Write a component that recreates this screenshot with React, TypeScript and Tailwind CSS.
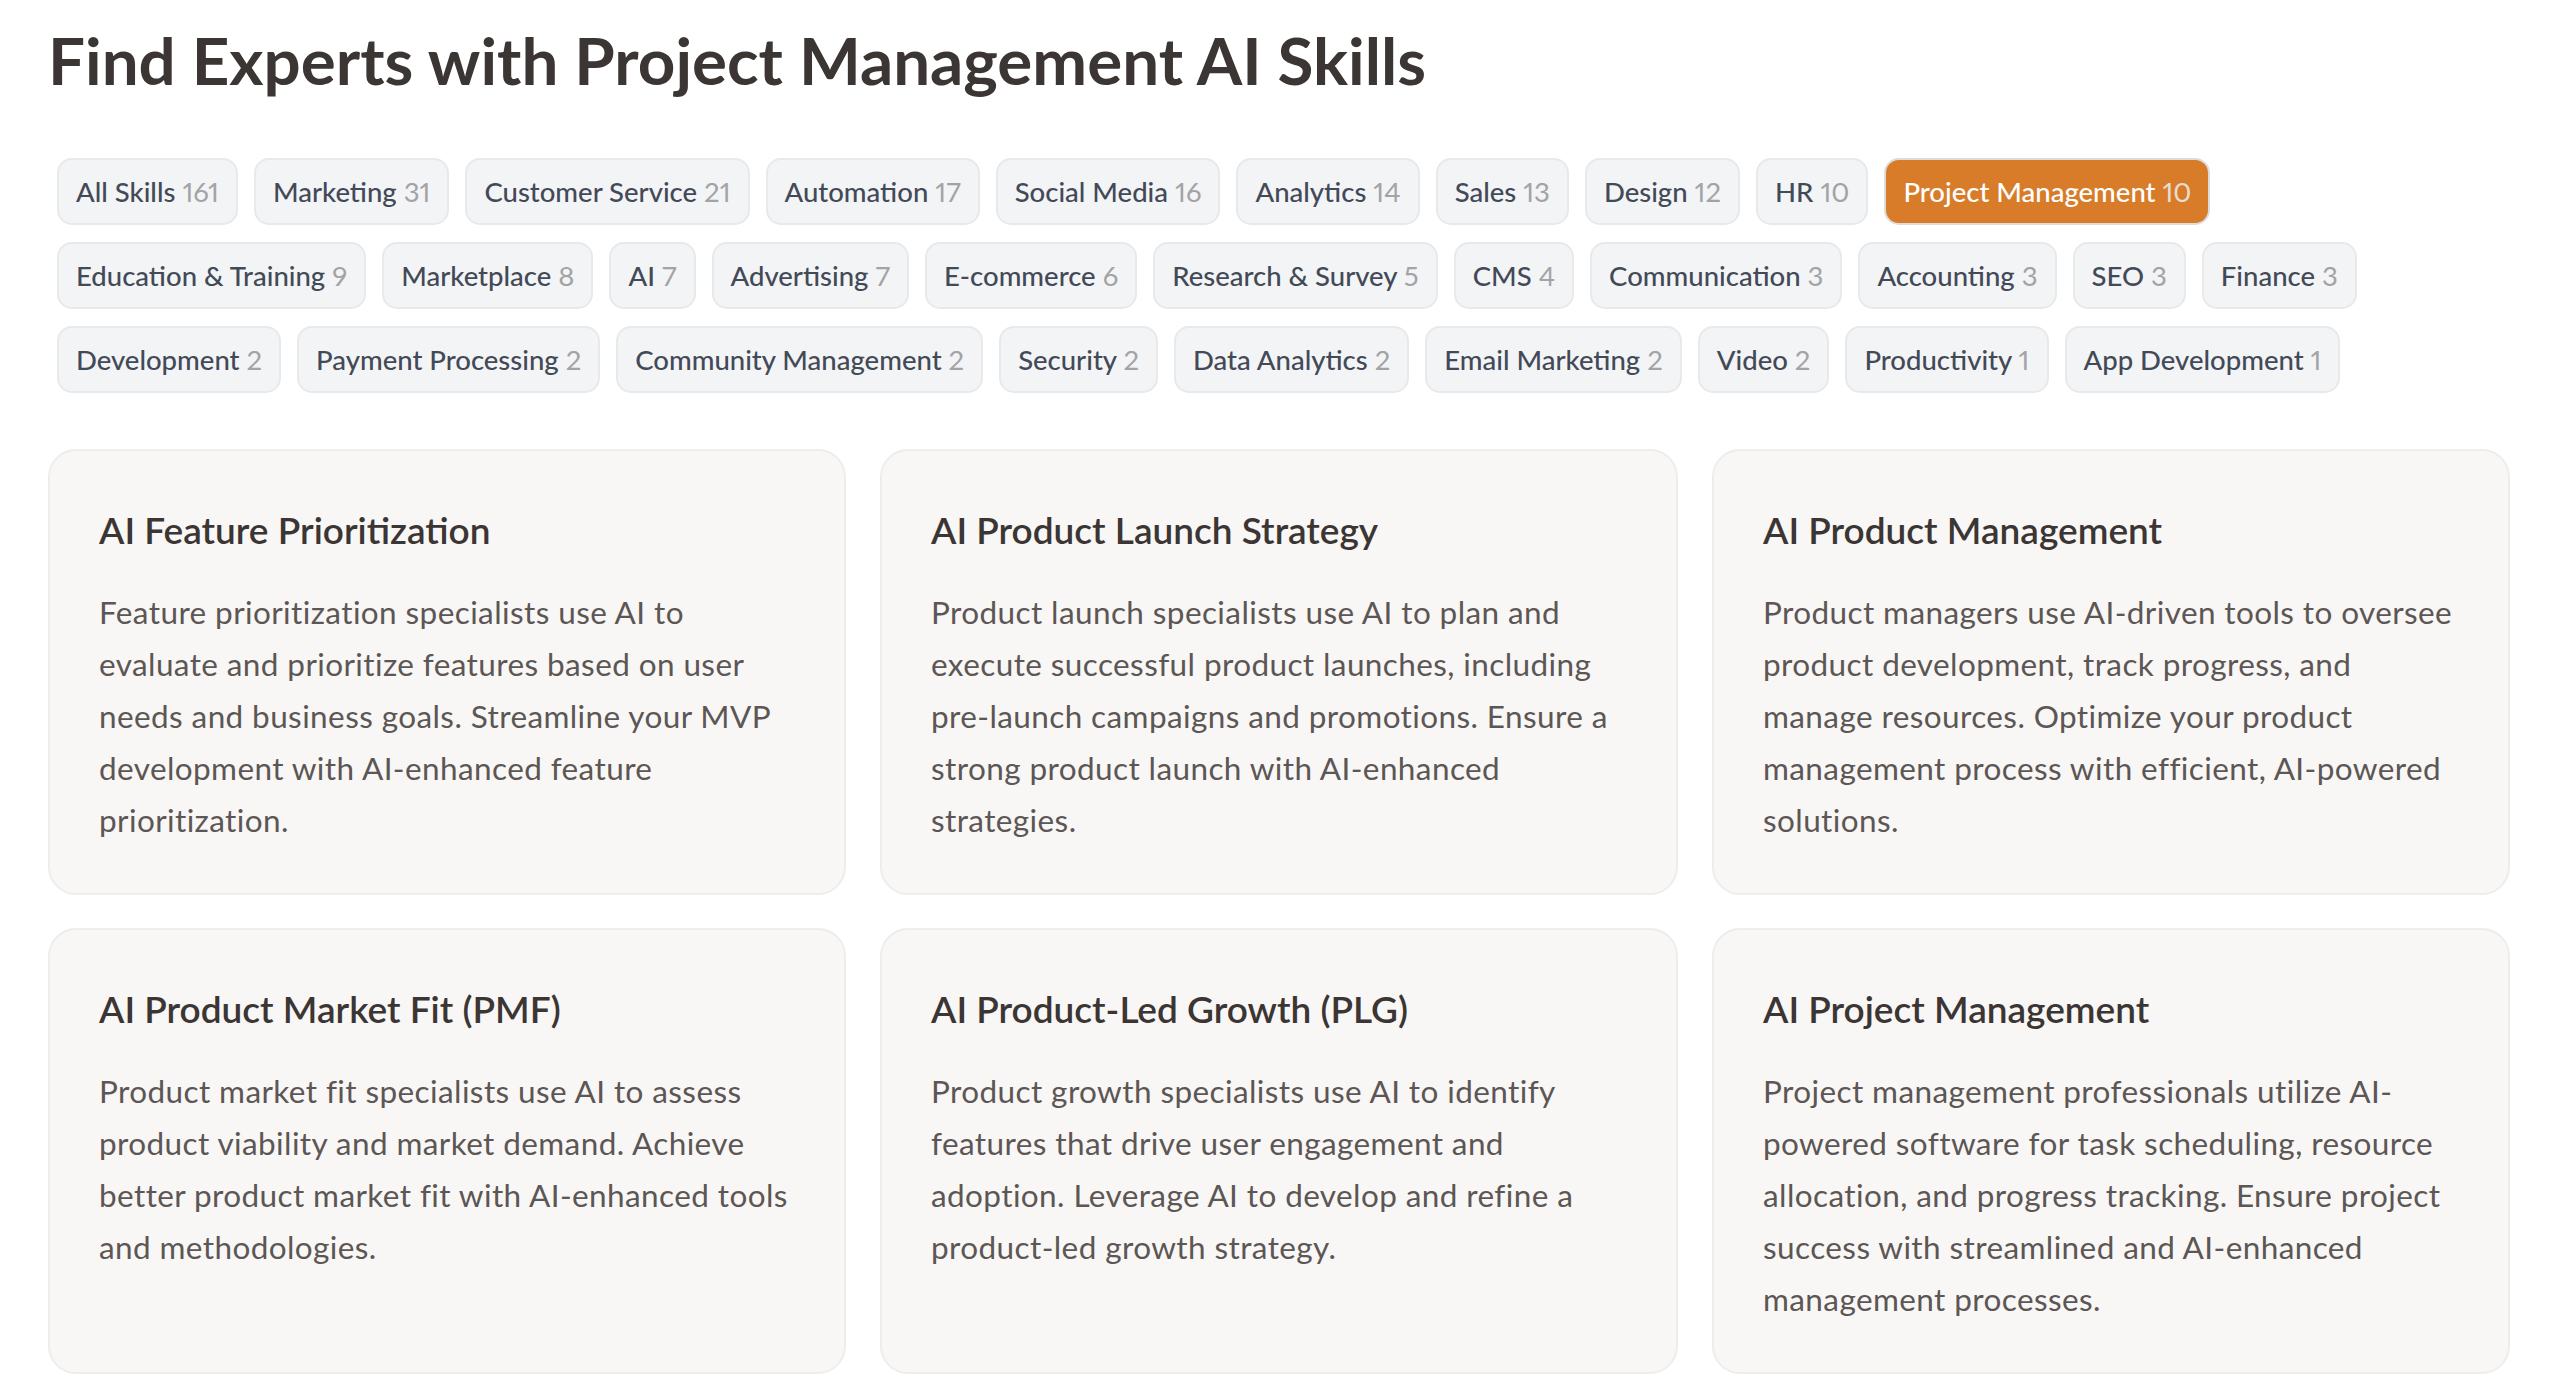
import React from "react";

type Skill = { name: string; count: number };

const skills: Skill[] = [
  { name: "All Skills", count: 161 },
  { name: "Marketing", count: 31 },
  { name: "Customer Service", count: 21 },
  { name: "Automation", count: 17 },
  { name: "Social Media", count: 16 },
  { name: "Analytics", count: 14 },
  { name: "Sales", count: 13 },
  { name: "Design", count: 12 },
  { name: "HR", count: 10 },
  { name: "Project Management", count: 10 },
  { name: "Education & Training", count: 9 },
  { name: "Marketplace", count: 8 },
  { name: "AI", count: 7 },
  { name: "Advertising", count: 7 },
  { name: "E-commerce", count: 6 },
  { name: "Research & Survey", count: 5 },
  { name: "CMS", count: 4 },
  { name: "Communication", count: 3 },
  { name: "Accounting", count: 3 },
  { name: "SEO", count: 3 },
  { name: "Finance", count: 3 },
  { name: "Development", count: 2 },
  { name: "Payment Processing", count: 2 },
  { name: "Community Management", count: 2 },
  { name: "Security", count: 2 },
  { name: "Data Analytics", count: 2 },
  { name: "Email Marketing", count: 2 },
  { name: "Video", count: 2 },
  { name: "Productivity", count: 1 },
  { name: "App Development", count: 1 },
];

const experts = [
  {
    title: "AI Feature Prioritization",
    text: "Feature prioritization specialists use AI to evaluate and prioritize features based on user needs and business goals. Streamline your MVP development with AI-enhanced feature prioritization.",
  },
  {
    title: "AI Product Launch Strategy",
    text: "Product launch specialists use AI to plan and execute successful product launches, including pre-launch campaigns and promotions. Ensure a strong product launch with AI-enhanced strategies.",
  },
  {
    title: "AI Product Management",
    text: "Product managers use AI-driven tools to oversee product development, track progress, and manage resources. Optimize your product management process with efficient, AI-powered solutions.",
  },
  {
    title: "AI Product Market Fit (PMF)",
    text: "Product market fit specialists use AI to assess product viability and market demand. Achieve better product market fit with AI-enhanced tools and methodologies.",
  },
  {
    title: "AI Product-Led Growth (PLG)",
    text: "Product growth specialists use AI to identify features that drive user engagement and adoption. Leverage AI to develop and refine a product-led growth strategy.",
  },
  {
    title: "AI Project Management",
    text: "Project management professionals utilize AI-powered software for task scheduling, resource allocation, and progress tracking. Ensure project success with streamlined and AI-enhanced management processes.",
  },
];

function SkillChip({ skill, active }: { skill: Skill; active: boolean }) {
  return (
    <button
      className={
        active
          ? "rounded-[15px] border-2 border-[#dcdcdc] bg-[#d97c29] px-[17px] py-[12px] text-[27.5px] leading-[39px] font-medium text-white proportional-nums"
          : "rounded-[15px] border-2 border-[#e8e9eb] bg-[#f3f4f6] px-[17px] py-[12px] text-[27.5px] leading-[39px] font-medium text-[#434a57] proportional-nums"
      }
    >
      {skill.name}{" "}
      <span className={active ? "font-normal text-[#e6ddd4]" : "font-normal text-[#a3a3a6]"}>
        {skill.count}
      </span>
    </button>
  );
}

export default function App() {
  const activeSkill = "Project Management";

  return (
    <div className="min-h-screen bg-white px-[48px] pt-[22px] pb-[20px] font-['Lato',sans-serif]">
      <h1 className="text-[65.5px] leading-[76px] font-bold text-[#3b3533]">
        Find Experts with Project Management AI Skills
      </h1>

      <div className="mt-[60px] flex max-w-[2400px] flex-wrap gap-x-[16px] gap-y-[17px] pl-[9px]">
        {skills.map((s) => (
          <SkillChip key={s.name} skill={s} active={s.name === activeSkill} />
        ))}
      </div>

      <div className="mt-[56px] grid grid-cols-3 gap-x-[34px] gap-y-[33px]">
        {experts.map((e) => (
          <div
            key={e.title}
            className="rounded-[28px] border-2 border-[#eeedeb] bg-[#f8f7f6] px-[49px] pt-[55px] pb-[47px]"
          >
            <h3 className="text-[37px] leading-[48px] font-semibold text-[#3b3533]">{e.title}</h3>
            <p className="mt-[32px] text-[31.5px] leading-[52px] tracking-[0.4px] text-[#5c5654]">
              {e.text}
            </p>
          </div>
        ))}
      </div>
    </div>
  );
}
